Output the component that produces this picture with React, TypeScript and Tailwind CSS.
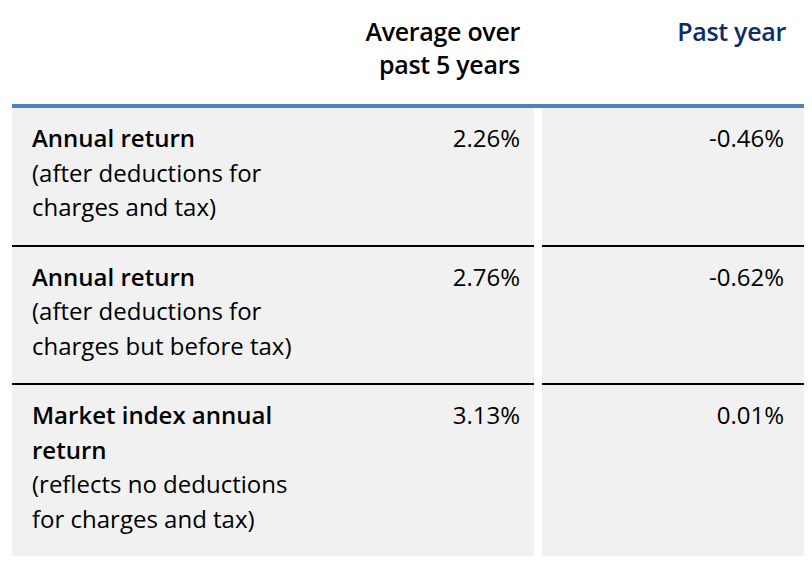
const rows = [
  {
    title: ["Annual return"],
    note: ["(after deductions for", "charges and tax)"],
    avg: "2.26%",
    past: "-0.46%",
  },
  {
    title: ["Annual return"],
    note: ["(after deductions for", "charges but before tax)"],
    avg: "2.76%",
    past: "-0.62%",
  },
  {
    title: ["Market index annual", "return"],
    note: ["(reflects no deductions", "for charges and tax)"],
    avg: "3.13%",
    past: "0.01%",
  },
]

const App = () => {
  return (
    <div className="min-h-screen bg-white pt-[15px] font-['Open_Sans',sans-serif] text-black">
      <div className="ml-[12px] w-[792px]">
        <div className="flex gap-[8px] pb-[23px] text-[25px] font-semibold leading-[33px] tracking-[-0.3px]">
          <div className="w-[522px] pr-[14px] text-right">
            <div>Average over</div>
            <div>past 5 years</div>
          </div>
          <div className="w-[262px] pr-[18px] text-right text-[#0b2b6b]">Past year</div>
        </div>

        <div className="h-[4px] bg-[#4f81bd]" />

        {rows.map((row, i) => {
          const last = i === rows.length - 1
          return (
            <div key={i} className="flex gap-[8px] text-[24px] leading-[34.5px]">
              <div
                className={`flex w-[522px] justify-between bg-[#f1f1f1] pt-[13px] pb-[20px] pl-[20px] pr-[14px] ${
                  last ? "" : "border-b-2 border-black"
                }`}
              >
                <div>
                  {row.title.map((t) => (
                    <div key={t} className="font-semibold">
                      {t}
                    </div>
                  ))}
                  {row.note.map((t) => (
                    <div key={t}>{t}</div>
                  ))}
                </div>
                <div className="text-right">{row.avg}</div>
              </div>
              <div
                className={`w-[262px] bg-[#f1f1f1] pt-[13px] pr-[20px] text-right ${
                  last ? "" : "border-b-2 border-black"
                }`}
              >
                {row.past}
              </div>
            </div>
          )
        })}
      </div>
    </div>
  )
}

export default App
